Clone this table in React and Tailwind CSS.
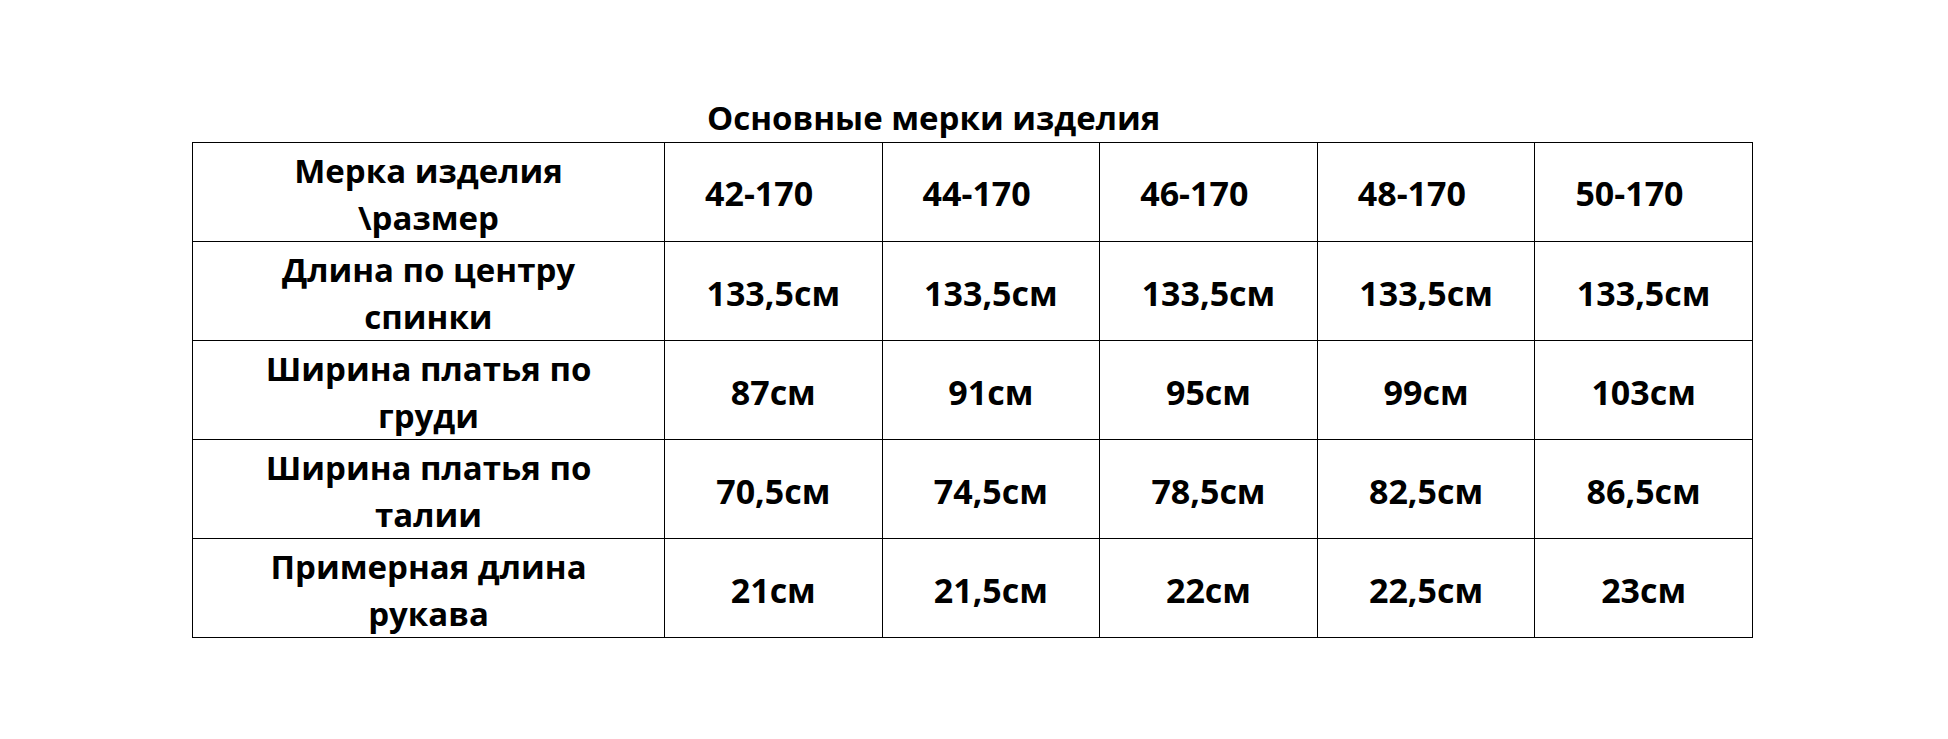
const sizes = ['42-170', '44-170', '46-170', '48-170', '50-170'];

const rows = [
  { label: ['Длина по центру', 'спинки'], values: ['133,5см', '133,5см', '133,5см', '133,5см', '133,5см'] },
  { label: ['Ширина платья по', 'груди'], values: ['87см', '91см', '95см', '99см', '103см'] },
  { label: ['Ширина платья по', 'талии'], values: ['70,5см', '74,5см', '78,5см', '82,5см', '86,5см'] },
  { label: ['Примерная длина', 'рукава'], values: ['21см', '21,5см', '22см', '22,5см', '23см'] },
];

const LabelCell = ({ lines }) => (
  <td className="border border-black text-center text-[33px] leading-[47px] pt-[3px]">
    {lines[0]}
    <br />
    {lines[1]}
  </td>
);

export default function App() {
  return (
    <div className="min-h-screen bg-white text-black font-bold font-['Open_Sans',sans-serif] text-[34px]">
      <div className="pl-[192px] pt-[94px]">
        <h1 className="pl-[515px] leading-[48px] text-[33px] font-bold">Основные мерки изделия</h1>

        <table className="table-fixed border-collapse w-[1560px]">
          <colgroup>
            <col className="w-[472px]" />
            {sizes.map((s) => (
              <col key={s} className="w-[217.6px]" />
            ))}
          </colgroup>
          <tbody>
            <tr className="h-[99px]">
              <LabelCell lines={['Мерка изделия', '\\размер']} />
              {sizes.map((s) => (
                <td key={s} className="border border-black text-left pl-[40px] pt-[2px]">
                  {s}
                </td>
              ))}
            </tr>

            {rows.map((row, i) => (
              <tr key={i} className="h-[99px]">
                <LabelCell lines={row.label} />
                {row.values.map((v, j) => (
                  <td key={j} className="border border-black text-center pt-[4px]">
                    {v}
                  </td>
                ))}
              </tr>
            ))}
          </tbody>
        </table>
      </div>
    </div>
  );
}
